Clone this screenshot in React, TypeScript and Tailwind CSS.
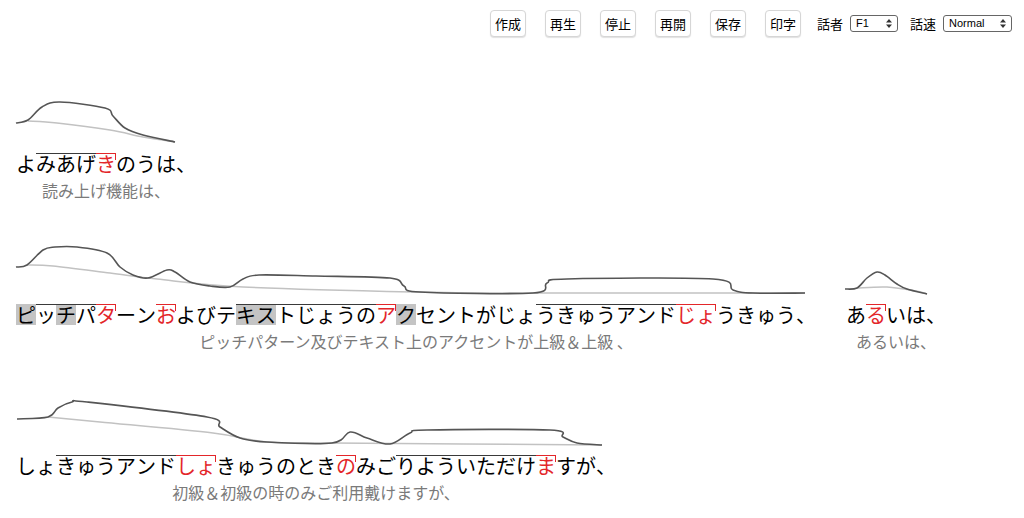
import React from 'react'

type Seg = [string, string]

interface Phrase {
  segs: Seg[]
  sub: string
  dark: number[][]
  gray: number[][]
}

// h = high (overline), a = accent nucleus, d = devoiced
const phrases: Phrase[] = [
  {
    segs: [['よ', ''], ['みあげ', 'h'], ['き', 'a'], ['のうは、', '']],
    sub: '読み上げ機能は、',
    dark: [[0, 30], [12, 27], [26, 14], [44, 9], [89, 15], [97, 23], [109, 35], [127, 42], [159, 49]],
    gray: [[12, 28], [41, 30], [94, 37], [127, 44], [159, 49]],
  },
  {
    segs: [
      ['ピ', 'd'], ['ッ', 'h'], ['チ', 'hd'], ['パ', 'h'], ['タ', 'a'], ['ーン', ''],
      ['お', 'a'], ['よびテ', ''], ['キス', 'hd'], ['トじょうの', 'h'], ['ア', 'a'],
      ['ク', 'd'], ['セントがじょ', ''], ['うきゅうアンド', 'h'], ['じょ', 'a'], ['うきゅう、', ''],
    ],
    sub: 'ピッチパターン及びテキスト上のアクセントが上級＆上級 、',
    dark: [
      [0, 23], [11, 21], [27, 6], [39, 3], [61, 3], [91, 9], [104, 23], [117, 31], [132, 34],
      [151, 26], [159, 28], [174, 38], [194, 42], [214, 43], [227, 35], [243, 31], [300, 32], [374, 34],
      [388, 42], [404, 48], [517, 49], [531, 39], [551, 35], [697, 35], [717, 46], [737, 49], [789, 49],
    ],
    gray: [[11, 21], [37, 22], [94, 29], [141, 35], [227, 43], [397, 48], [517, 49], [789, 49]],
  },
  {
    segs: [['あ', ''], ['る', 'a'], ['いは、', '']],
    sub: 'あるいは、',
    dark: [[-1, 45], [11, 44], [21, 34], [31, 28], [39, 31], [51, 40], [61, 45], [81, 50]],
    gray: [[11, 44], [41, 43], [70, 47], [81, 50]],
  },
  {
    segs: [
      ['しょ', ''], ['きゅうアンド', 'h'], ['しょ', 'a'], ['きゅうのとき', ''], ['の', 'a'],
      ['みご', ''], ['りよういただけ', 'h'], ['ま', 'a'], ['すが、', ''],
    ],
    sub: '初級＆初級の時のみご利用戴けますが、',
    dark: [
      [1, 24], [32, 22], [42, 13], [56, 7], [71, 7], [191, 22], [204, 32], [224, 43], [251, 47],
      [316, 48], [334, 37], [351, 43], [374, 49], [394, 38], [411, 35], [534, 35], [547, 42],
      [561, 48], [586, 50],
    ],
    gray: [[32, 22], [84, 27], [197, 38], [251, 47], [316, 48], [586, 50]],
  },
]

function smooth(pts: number[][]) {
  let d = `M${pts[0][0]},${pts[0][1]}`
  for (let i = 0; i < pts.length - 1; i++) {
    const p0 = pts[i - 1] || pts[i]
    const p1 = pts[i]
    const p2 = pts[i + 1]
    const p3 = pts[i + 2] || p2
    const c1x = p1[0] + (p2[0] - p0[0]) / 6
    const c1y = p1[1] + (p2[1] - p0[1]) / 6
    const c2x = p2[0] - (p3[0] - p1[0]) / 6
    const c2y = p2[1] - (p3[1] - p1[1]) / 6
    d += ` C${c1x},${c1y} ${c2x},${c2y} ${p2[0]},${p2[1]}`
  }
  return d
}

function Mora({ ch, flag, tick }: { ch: string; flag: string; tick: boolean }) {
  const accent = flag.includes('a')
  const high = flag.includes('h')
  const dev = flag.includes('d')
  return (
    <span
      className={
        'relative inline-block leading-[20px] border-t ' +
        (accent ? 'border-[#e3262a] text-[#e3262a] ' : high ? 'border-[#3a3a3a] text-black ' : 'border-transparent text-black ') +
        (dev ? 'bg-[#c4c4c4]' : '')
      }
    >
      {ch}
      {tick && <span className="absolute right-0 top-[-1px] w-px h-[7px] bg-[#e3262a]" />}
    </span>
  )
}

function PhraseBlock({ p }: { p: Phrase }) {
  const count = p.segs.reduce((n, s) => n + Array.from(s[0]).length, 0)
  const w = count * 20
  return (
    <div className="flex flex-col items-center mr-[30px] h-[151px]">
      <svg width={w} height={56} className="self-start overflow-visible">
        <path d={smooth(p.gray)} fill="none" stroke="#c2c2c2" strokeWidth={1.5} />
        <path d={smooth(p.dark)} fill="none" stroke="#555" strokeWidth={1.6} />
      </svg>
      <div className="mt-[4px] flex self-start text-[20px] whitespace-nowrap">
        {p.segs.map((s, i) => {
          const chars = Array.from(s[0])
          return chars.map((c, j) => (
            <Mora key={i + '-' + j} ch={c} flag={s[1]} tick={s[1].includes('a') && j === chars.length - 1} />
          ))
        })}
      </div>
      <div className="mt-[6px] text-[16px] leading-[20px] text-[#7a7a7a] whitespace-pre">{p.sub}</div>
    </div>
  )
}

function UpDown() {
  return (
    <svg width="6" height="9" viewBox="0 0 6 9" className="ml-auto">
      <path d="M3 0 L6 3.5 L0 3.5 Z M3 9 L6 5.5 L0 5.5 Z" fill="#333" />
    </svg>
  )
}

export default function App() {
  const buttons = ['作成', '再生', '停止', '再開', '保存', '印字']
  return (
    <div className="min-h-screen bg-white font-['Noto_Sans_CJK_JP',sans-serif] text-black">
      <div className="flex justify-end items-center pt-[10px] pr-[12px]">
        {buttons.map((b, i) => (
          <button
            key={b}
            className={
              'h-[27px] w-[36px] rounded-[4px] border border-[#d6d6d6] bg-white text-[13px] leading-none shadow-[0_1px_1px_rgba(0,0,0,0.12)] ' +
              (i === 0 ? '' : 'ml-[19px]')
            }
          >
            {b}
          </button>
        ))}
        <span className="ml-[16px] text-[13px]">話者</span>
        <div className="ml-[7px] flex items-center h-[17px] w-[48px] rounded-[3px] border border-[#666] px-[5px] text-[11px] font-['Liberation_Sans',sans-serif]">
          F1
          <UpDown />
        </div>
        <span className="ml-[12px] text-[13px]">話速</span>
        <div className="ml-[7px] flex items-center h-[17px] w-[69px] rounded-[3px] border border-[#666] px-[5px] text-[11px] font-['Liberation_Sans',sans-serif]">
          Normal
          <UpDown />
        </div>
      </div>
      <div className="flex flex-wrap pl-[16px] mt-[56px]">
        {phrases.map((p, i) => (
          <PhraseBlock key={i} p={p} />
        ))}
      </div>
    </div>
  )
}
